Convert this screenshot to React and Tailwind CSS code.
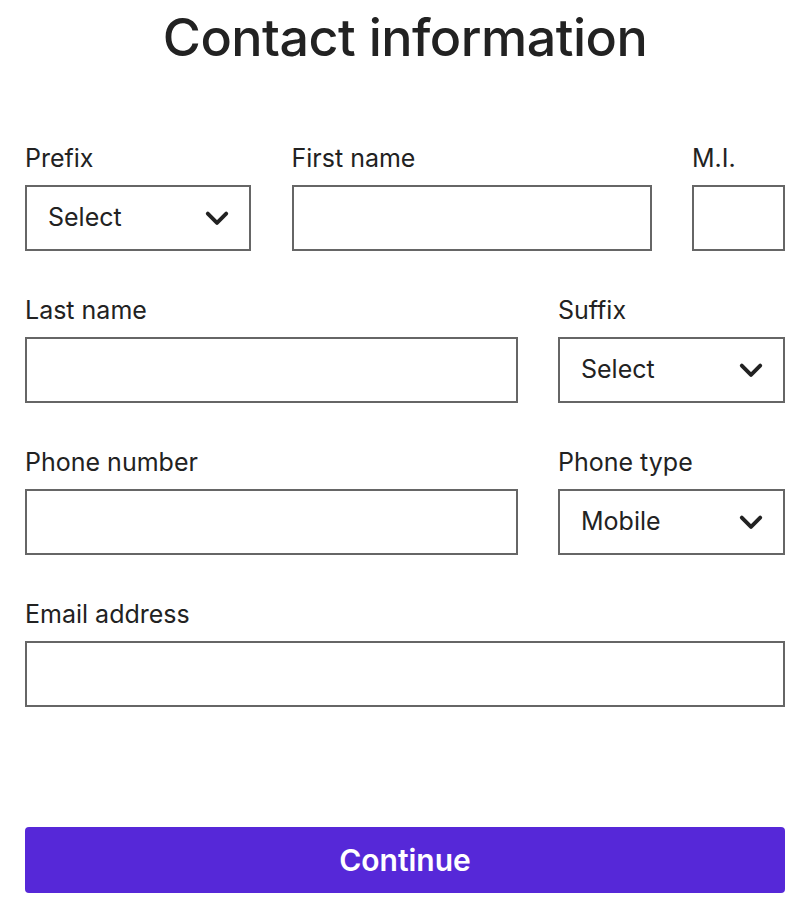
import React from 'react';

const font = { fontFamily: 'Inter, "Noto Sans", sans-serif' };

function Chevron() {
    return (
        <svg width="26" height="26" viewBox="0 0 24 24" fill="none" stroke="#222" strokeWidth="3.6" strokeLinecap="round" strokeLinejoin="round">
            <path d="M3.5 8l8.5 8.5 8.5-8.5" />
        </svg>
    );
}

function Field({ label, width, select }) {
    return (
        <div className="flex flex-col" style={{ width }}>
            <label className="text-[25px] leading-[32px] text-[#222] h-[32px] mb-[11px] whitespace-nowrap">{label}</label>
            {select ? (
                <div className="h-[66px] border-2 border-[#666] flex items-center justify-between pl-[21px] pr-[19px] text-[25px] text-[#222]">
                    <span>{select}</span>
                    <Chevron />
                </div>
            ) : (
                <input className="h-[66px] border-2 border-[#666] outline-none px-4 text-[25px]" />
            )}
        </div>
    );
}

export default function App() {
    return (
        <div className="bg-white min-h-[900px] px-[25px]" style={font}>
            <h1 className="text-center text-[52px] font-medium text-[#222] leading-[76px] tracking-[-0.5px]">Contact information</h1>

            <div className="mt-[66px] flex flex-col gap-[43px]">
                <div className="flex justify-between">
                    <Field label="Prefix" width={226} select="Select" />
                    <Field label="First name" width={360} />
                    <Field label="M.I." width={93} />
                </div>
                <div className="flex justify-between">
                    <Field label="Last name" width={493} />
                    <Field label="Suffix" width={227} select="Select" />
                </div>
                <div className="flex justify-between">
                    <Field label="Phone number" width={493} />
                    <Field label="Phone type" width={227} select="Mobile" />
                </div>
                <div className="flex">
                    <Field label="Email address" width={760} />
                </div>
            </div>

            <button className="mt-[120px] w-full h-[66px] rounded-[4px] bg-[#5628d8] text-white text-[30px] font-semibold">
                Continue
            </button>
        </div>
    );
}
